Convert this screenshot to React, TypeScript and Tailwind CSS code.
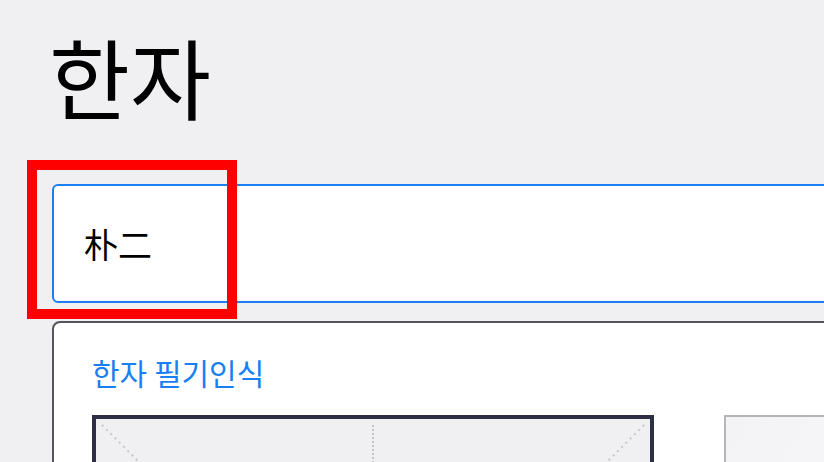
export default function App() {
  return (
    <div className="relative w-[824px] h-[462px] overflow-hidden bg-[#f0f0f3] font-['Noto_Sans_CJK_KR','Noto_Sans',sans-serif]">
      <div className="pl-[52px] pt-[20px] w-[1000px]">
        <h1 className="text-[88px] leading-[110px] font-normal text-black -ml-[3px]">한자</h1>

        <div className="mt-[54px] w-[900px] h-[119px] rounded-[6px] border-2 border-[#1a7ff2] bg-white flex items-center pl-[30px]">
          <span className="text-[34px] text-black leading-none">朴二</span>
        </div>

        <div className="mt-[18px] w-[900px] h-[700px] rounded-[8px] border-2 border-[#55555f] bg-white pl-[38px] pt-[28px]">
          <h2 className="text-[30px] leading-[42px] text-[#1a7ff2]">한자 필기인식</h2>
          <div className="mt-[22px] flex gap-[70px]">
            <div className="relative w-[562px] h-[562px] border-4 border-[#2c2e44] bg-[#f0f0f3]">
              <svg className="absolute inset-0 w-full h-full" viewBox="0 0 554 554">
                <line x1="6" y1="6" x2="548" y2="548" stroke="#c4c6cc" strokeWidth="2" strokeDasharray="2 4" />
                <line x1="548" y1="6" x2="6" y2="548" stroke="#c4c6cc" strokeWidth="2" strokeDasharray="2 4" />
                <line x1="277" y1="6" x2="277" y2="554" stroke="#c4c6cc" strokeWidth="2" strokeDasharray="2 2" />
              </svg>
            </div>
            <div className="w-[200px] h-[300px] border-2 border-[#b4b4ba] bg-gradient-to-br from-[#f3f3f5] to-[#fafafb]" />
          </div>
        </div>
      </div>

      <div className="absolute left-[27px] top-[160px] w-[210px] h-[159px] border-[10px] border-[#ff0000]" />
    </div>
  );
}
